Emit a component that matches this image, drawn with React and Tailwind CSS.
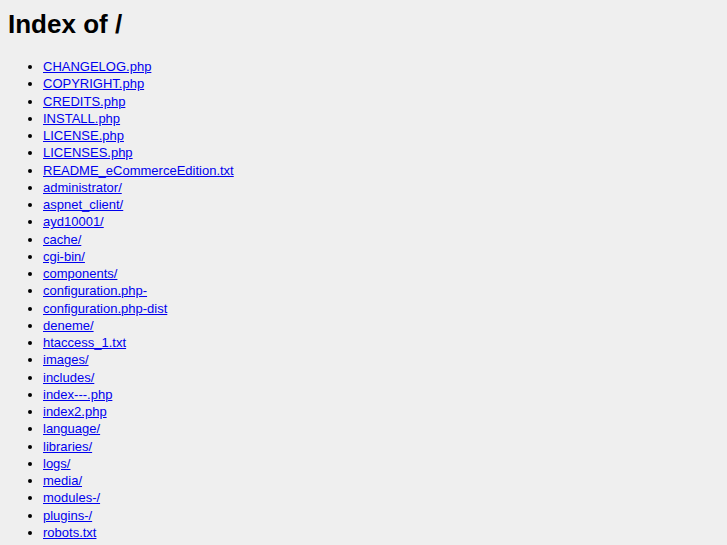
// Apache-style directory listing
const entries = [
  'CHANGELOG.php',
  'COPYRIGHT.php',
  'CREDITS.php',
  'INSTALL.php',
  'LICENSE.php',
  'LICENSES.php',
  'README_eCommerceEdition.txt',
  'administrator/',
  'aspnet_client/',
  'ayd10001/',
  'cache/',
  'cgi-bin/',
  'components/',
  'configuration.php-',
  'configuration.php-dist',
  'deneme/',
  'htaccess_1.txt',
  'images/',
  'includes/',
  'index---.php',
  'index2.php',
  'language/',
  'libraries/',
  'logs/',
  'media/',
  'modules-/',
  'plugins-/',
  'robots.txt',
];

export default function App() {
  return (
    <div className="min-h-screen bg-[#efefef] text-black font-['Liberation_Sans',Arial,sans-serif] pl-2 pt-[9px]">
      <h1 className="text-[26px] font-bold leading-[30px] m-0">Index of /</h1>
      <ul className="list-disc mt-[19px] pl-[35px] text-[13px] leading-[17.25px]">
        {entries.map((name) => (
          <li key={name}>
            <a href={name} className="text-[#0000ee] underline">
              {name}
            </a>
          </li>
        ))}
      </ul>
    </div>
  );
}
